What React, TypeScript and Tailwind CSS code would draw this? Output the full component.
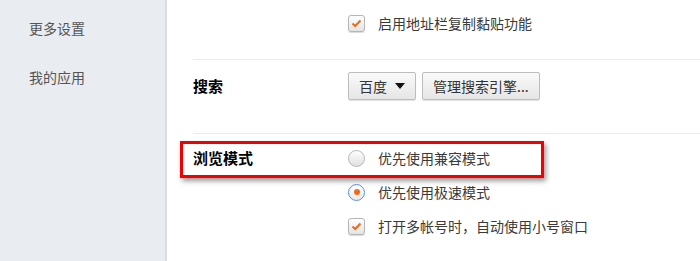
import React from "react";

const Checkbox = () => (
  <span className="flex h-[17px] w-[17px] items-center justify-center rounded-[3px] border border-[#b5b5b5] bg-gradient-to-b from-[#ffffff] to-[#e4e4e4] shadow-[0_1px_1px_rgba(0,0,0,0.15)]">
    <svg width="11" height="9" viewBox="0 0 11 9">
      <path d="M1.5 4.5 L4.2 7 L9.5 1.5" fill="none" stroke="#ef6a1a" strokeWidth="2" />
    </svg>
  </span>
);

const Radio = ({ checked }: { checked?: boolean }) => (
  <span
    className={
      checked
        ? "flex h-[17px] w-[17px] items-center justify-center rounded-full border border-[#5a8fe6] bg-gradient-to-b from-[#ffffff] to-[#eaeaea]"
        : "flex h-[17px] w-[17px] items-center justify-center rounded-full border border-[#b5b5b5] bg-gradient-to-b from-[#ffffff] to-[#e0e0e0]"
    }
  >
    {checked && <span className="h-[6px] w-[6px] rounded-full bg-[#ef6a1a]" />}
  </span>
);

const Option = ({ children, top }: { children: React.ReactNode; top: React.ReactNode }) => (
  <div className="flex h-[20px] items-center gap-[13px]">
    {top}
    <span className="text-[14px] leading-[20px] text-[#3a3a3a]">{children}</span>
  </div>
);

const Btn = ({ children }: { children: React.ReactNode }) => (
  <button className="flex h-[28px] items-center rounded-[2px] border border-[#bdbdbd] bg-gradient-to-b from-[#fafafa] to-[#e6e6e6] px-[10px] text-[14px] leading-[20px] text-[#333] shadow-[0_1px_1px_rgba(0,0,0,0.12)]">
    {children}
  </button>
);

export default function App() {
  return (
    <div
      className="flex h-[261px] w-[700px] overflow-hidden bg-white"
      style={{ fontFamily: '"Noto Sans CJK SC", "Noto Sans", sans-serif' }}
    >
      <aside className="flex w-[167px] shrink-0 flex-col border-r-2 border-[#d9dde3] bg-[#e9ecf1] pl-[29px] pt-[18px] text-[14px] leading-[20px] text-[#555]">
        <div className="h-[49px]">更多设置</div>
        <div>我的应用</div>
      </aside>

      <main className="flex flex-1 flex-col pl-[26px]">
        <section className="h-[60px] border-b border-[#ececec] pl-[155px] pt-[13px]">
          <Option top={<Checkbox />}>启用地址栏复制黏贴功能</Option>
        </section>

        <section className="flex h-[74px] items-start border-b border-[#ececec] pt-[12px]">
          <div className="w-[155px] pt-[4px] text-[15px] font-bold leading-[20px] text-black">搜索</div>
          <div className="flex gap-[6px]">
            <Btn>
              百度
              <svg className="ml-[8px]" width="10" height="6" viewBox="0 0 10 6">
                <path d="M0 0 H10 L5 6 Z" fill="#111" />
              </svg>
            </Btn>
            <Btn>管理搜索引擎...</Btn>
          </div>
        </section>

        <section className="relative flex pt-[14px]">
          <div className="absolute left-[-13px] top-[7px] h-[37px] w-[364px] border-[3px] border-[#f20000] shadow-[2px_3px_5px_rgba(0,0,0,0.4)]" />
          <div className="w-[155px] text-[15px] font-bold leading-[20px] text-black">浏览模式</div>
          <div className="flex flex-col gap-[14px]">
            <Option top={<Radio />}>优先使用兼容模式</Option>
            <Option top={<Radio checked />}>优先使用极速模式</Option>
            <Option top={<Checkbox />}>打开多帐号时，自动使用小号窗口</Option>
          </div>
        </section>
      </main>
    </div>
  );
}
